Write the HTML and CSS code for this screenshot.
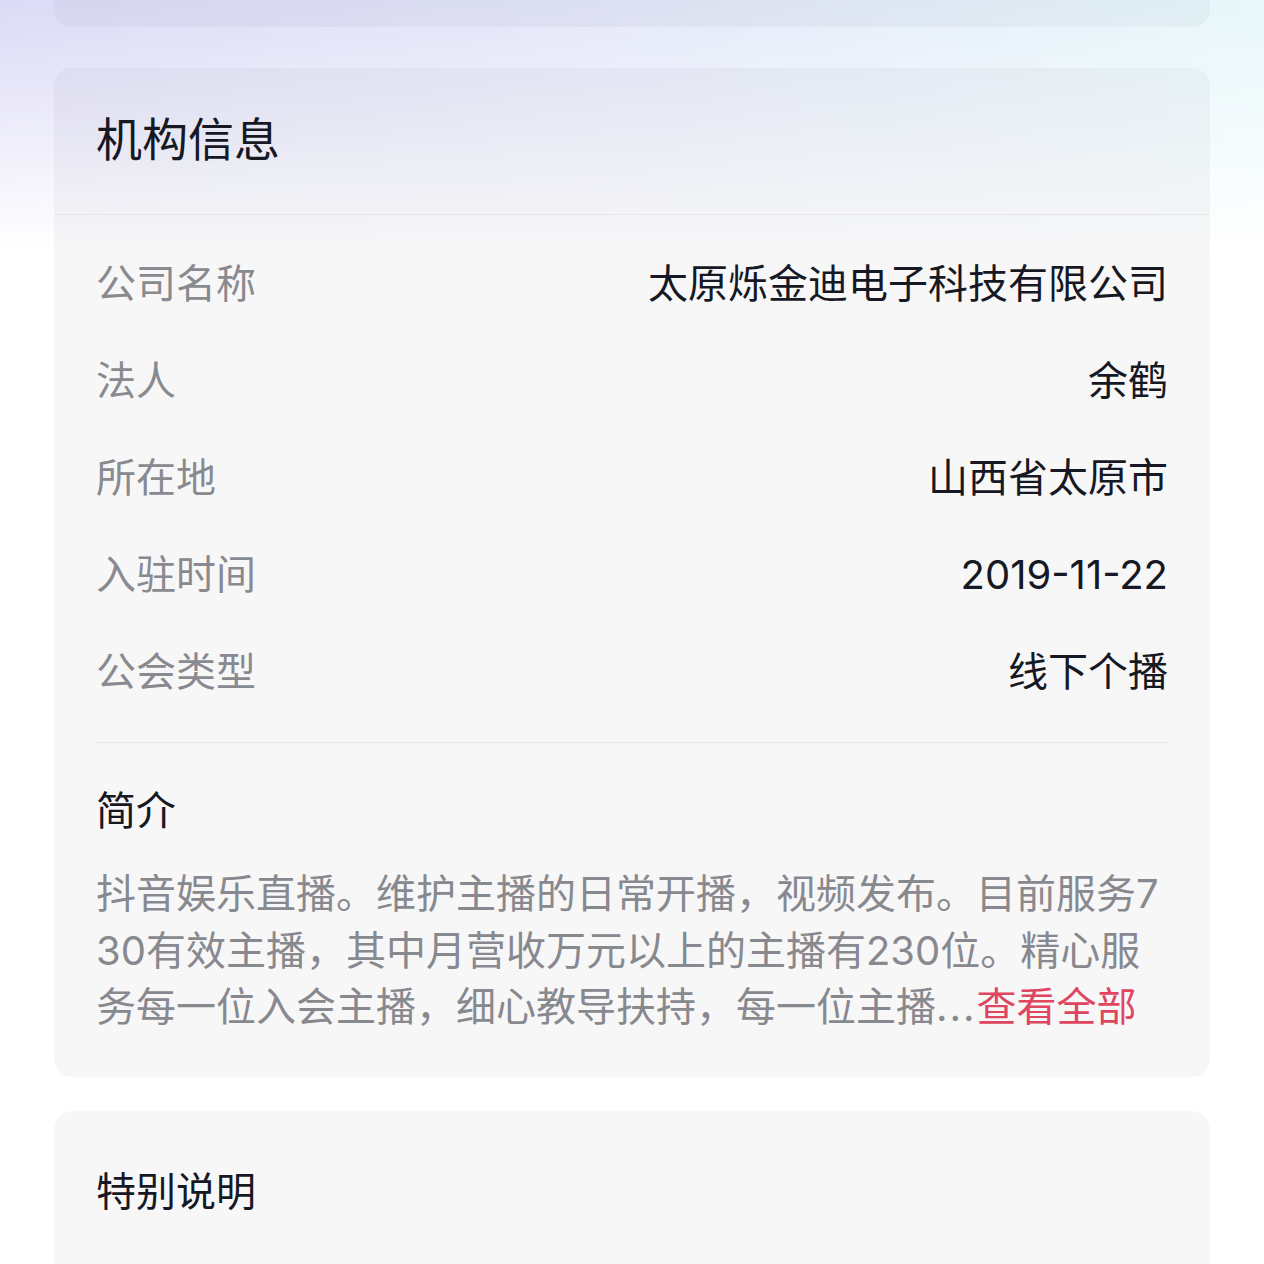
FILE: index.html
```html
<!DOCTYPE html>
<html lang="zh-CN">
<head>
<meta charset="utf-8">
<link rel="stylesheet" href="styles.css">
</head>
<body>
<div class="page">
  <div class="card card-top"></div>

  <div class="card card-info">
    <div class="card-header">
      <h2 class="card-title">机构信息</h2>
    </div>
    <div class="rows">
      <div class="row"><span class="label">公司名称</span><span class="value">太原烁金迪电子科技有限公司</span></div>
      <div class="row"><span class="label">法人</span><span class="value">余鹤</span></div>
      <div class="row"><span class="label">所在地</span><span class="value">山西省太原市</span></div>
      <div class="row"><span class="label">入驻时间</span><span class="value">2019-11-22</span></div>
      <div class="row"><span class="label">公会类型</span><span class="value">线下个播</span></div>
    </div>
    <div class="intro">
      <h3 class="intro-title">简介</h3>
      <p class="intro-text">抖音娱乐直播。维护主播的日常开播，视频发布。目前服务730有效主播，其中月营收万元以上的主播有230位。精心服务每一位入会主播，细心教导扶持，每一位主播<span class="ellipsis">...</span><a class="more">查看全部</a></p>
    </div>
  </div>

  <div class="card card-note">
    <h2 class="note-title">特别说明</h2>
  </div>
</div>
</body>
</html>
```

FILE: styles.css
```css
html, body {
  margin: 0;
  padding: 0;
}

body {
  font-family: Inter, "Noto Sans CJK SC", "Noto Sans", sans-serif;
  background:
    linear-gradient(to bottom, rgba(255,255,255,0) 0px, rgba(255,255,255,0.5) 130px, #ffffff 250px),
    linear-gradient(90deg, #dcdaf6 0%, #e4e8f9 50%, #e8f8fb 100%);
  background-repeat: no-repeat;
  background-size: 100% 300px, 100% 300px;
  background-color: #ffffff;
  min-height: 1264px;
  overflow: hidden;
}

.page {
  padding: 0 54px;
  display: flex;
  flex-direction: column;
}

.card {
  background: rgba(10, 10, 30, 0.032);
  border-radius: 18px;
}

.card-top {
  height: 27px;
  border-radius: 0 0 18px 18px;
}

.card-info {
  margin-top: 41px;
  display: flex;
  flex-direction: column;
}

.card-header {
  height: 146px;
  border-bottom: 1px solid #e6e6e8;
  display: flex;
  align-items: center;
  padding: 0 42px;
}

.card-title {
  margin: 0;
  font-size: 46px;
  font-weight: 400;
  color: #161823;
  line-height: 60px;
  position: relative;
  top: -2px;
}

.rows {
  padding: 20px 42px 0;
  display: flex;
  flex-direction: column;
}

.row {
  height: 97px;
  display: flex;
  align-items: center;
  justify-content: space-between;
  font-size: 40px;
  line-height: 56px;
}

.label {
  color: #898a8f;
}

.value {
  color: #161823;
}

.intro {
  margin: 22px 42px 0;
  border-top: 1px solid #e6e6e8;
  padding: 40px 0 41px;
}

.intro-title {
  margin: 0;
  font-size: 40px;
  font-weight: 400;
  color: #161823;
  line-height: 56px;
}

.intro-text {
  margin: 27px 0 0;
  font-size: 40px;
  line-height: 56.5px;
  color: #88898e;
  word-break: break-all;
}

.ellipsis {
  letter-spacing: 2px;
}

.more {
  color: #df4660;
}

.card-note {
  margin-top: 34px;
  height: 400px;
  padding: 53px 42px 0;
  border-radius: 18px 18px 0 0;
}

.note-title {
  margin: 0;
  font-size: 40px;
  font-weight: 400;
  color: #161823;
  line-height: 56px;
}
```
